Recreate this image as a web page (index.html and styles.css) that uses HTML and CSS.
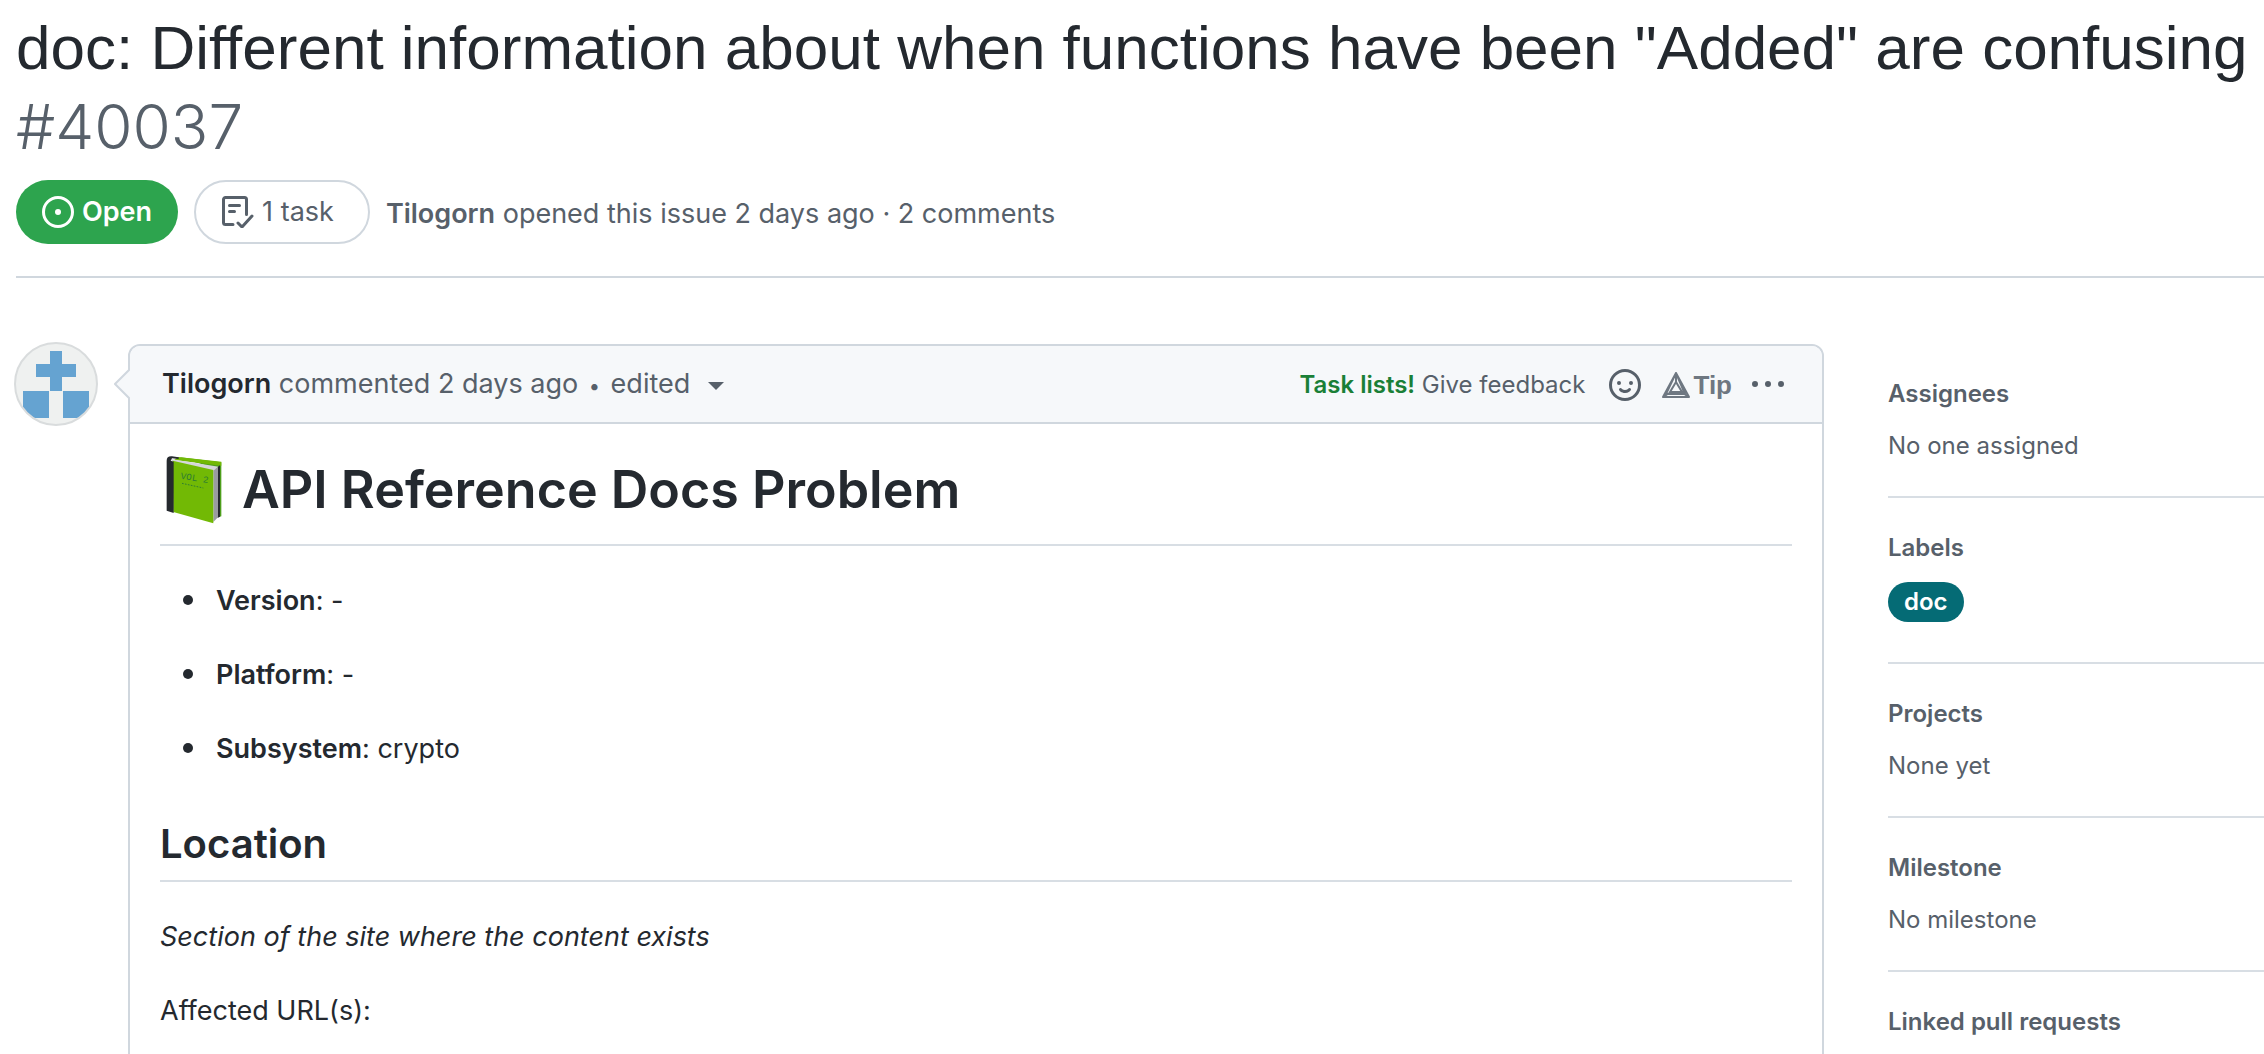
FILE: index.html
```
<!DOCTYPE html>
<html lang="en">
<head>
  <meta charset="UTF-8">
  <title>doc: Different information about when functions have been "Added" are confusing #40037</title>
  <link rel="stylesheet" href="styles.css">
</head>
<body>

  <header class="issue-header">
    <h1 class="issue-title">
      <span>doc: Different information about when functions have been "Added" are confusing</span>
      <span class="issue-number">#40037</span>
    </h1>
    <div class="issue-meta">
      <span class="state">
        <svg width="32" height="32" viewBox="0 0 16 16" fill="currentColor" aria-hidden="true"><path d="M8 9.5a1.5 1.5 0 100-3 1.5 1.5 0 000 3z"/><path fill-rule="evenodd" d="M8 0a8 8 0 100 16A8 8 0 008 0zM1.5 8a6.5 6.5 0 1113 0 6.5 6.5 0 01-13 0z"/></svg>
        Open
      </span>
      <span class="tasks">
        <svg width="32" height="32" viewBox="0 0 16 16" fill="none" stroke="currentColor" stroke-width="1.5" stroke-linecap="round" stroke-linejoin="round" aria-hidden="true"><path d="M5.5 14.25H1.75a1 1 0 01-1-1V1.75a1 1 0 011-1h9.5a1 1 0 011 1v7.5M3.75 4.75h5M3.75 7.75h2.5M8 13.5l2 2 5-5.5"/></svg>
        1 task
      </span>
      <span class="opened"><a class="author" href="#">Tilogorn</a> opened this issue 2 days ago · 2 comments</span>
    </div>
  </header>

  <div class="layout">
    <a class="avatar" href="#" aria-label="Tilogorn">
      <svg width="84" height="84" viewBox="0 0 84 84" aria-hidden="true">
        <defs><clipPath id="round"><circle cx="42" cy="42" r="41"/></clipPath></defs>
        <circle cx="42" cy="42" r="41" fill="#eff1f0"/>
        <path clip-path="url(#round)" fill="#65a3d1" d="M36 9h12v13h14v13H48v14h27v27H49V49H35v27H9V49h27V35H22V22h14z"/>
        <circle cx="42" cy="42" r="41" fill="none" stroke="#d9dcdd" stroke-width="2"/>
      </svg>
    </a>

    <main class="comment">
      <div class="comment-header">
        <svg class="caret" width="16" height="32" viewBox="0 0 16 32" aria-hidden="true"><path d="M16 1L1 16l15 15" fill="#f6f8fa" stroke="#d0d7de" stroke-width="2"/></svg>
        <div class="comment-info">
          <a class="author dark" href="#">Tilogorn</a> commented 2 days ago <span class="dot">•</span>
          <button class="edited">edited <span class="triangle"></span></button>
        </div>
        <div class="comment-actions">
          <span class="feedback"><a class="task-lists" href="#">Task lists!</a> <a href="#">Give feedback</a></span>
          <button class="icon-btn" aria-label="Add reaction">
            <svg width="32" height="32" viewBox="0 0 16 16" fill="currentColor" aria-hidden="true"><path fill-rule="evenodd" d="M1.5 8a6.5 6.5 0 1113 0 6.5 6.5 0 01-13 0zM8 0a8 8 0 100 16A8 8 0 008 0zM5 8a1 1 0 100-2 1 1 0 000 2zm7-1a1 1 0 11-2 0 1 1 0 012 0zM5.32 9.636a.75.75 0 011.038.175l.007.009c.103.118.22.222.35.31.264.178.683.37 1.285.37.602 0 1.02-.192 1.285-.371.13-.088.247-.192.35-.31l.007-.008a.75.75 0 111.222.87l-.614-.431c.614.43.614.431.613.431v.001l-.001.002-.002.003-.005.007-.014.019a1.984 1.984 0 01-.184.213c-.16.166-.338.316-.53.445-.63.418-1.37.638-2.127.629-.946 0-1.652-.308-2.126-.63a3.331 3.331 0 01-.715-.657l-.014-.02-.005-.006-.002-.003v-.002h-.001l.613-.432-.614.43a.75.75 0 01.183-1.044z"/></svg>
          </button>
          <button class="tip">
            <svg width="30" height="28" viewBox="0 0 30 28" fill="none" stroke="currentColor" stroke-width="2" stroke-linejoin="round" aria-hidden="true"><path d="M15 2L2 26h26zM15 2v10M2 26l8-5M28 26l-8-5M15 11l-6 10h12zM15 2l9 21H5z"/></svg>
            Tip
          </button>
          <button class="icon-btn" aria-label="Show options">
            <svg width="32" height="32" viewBox="0 0 16 16" fill="currentColor" aria-hidden="true"><path d="M8 9a1.5 1.5 0 100-3 1.5 1.5 0 000 3zM1.5 9a1.5 1.5 0 100-3 1.5 1.5 0 000 3zm13 0a1.5 1.5 0 100-3 1.5 1.5 0 000 3z"/></svg>
          </button>
        </div>
      </div>

      <div class="comment-body">
        <h1>
          <svg class="book" width="56" height="68" viewBox="0 0 168 204" role="img" aria-label="green book">
            <path fill="#4d9e1c" d="M36 3l130 16v162l-8 3V40z"/>
            <path fill="#72b905" d="M36 3l130 14v12L24 12z"/>
            <path fill="#d5d6da" d="M14 9l144 23-16 12L18 16z"/>
            <path fill="#9a9ba1" d="M142 44l14-12v152l-14 14z"/>
            <path fill="#25292e" d="M156 32l6-4v154l-6 3z"/>
            <path fill="#72b905" d="M20 14l122 28v160L22 168z"/>
            <path fill="#25292e" d="M2 14C2 4 8 0 18 1l20 3v5l-20-2-4 7 9 3v154L2 164z"/>
            <text class="book-label" x="43" y="68" transform="rotate(9 43 68)">VOL 2</text>
            <path d="M48 82l64 14" stroke="#2f7d32" stroke-width="3" stroke-dasharray="5 4"/>
          </svg>
          API Reference Docs Problem
        </h1>
        <ul>
          <li><strong>Version</strong>: -</li>
          <li><strong>Platform</strong>: -</li>
          <li><strong>Subsystem</strong>: crypto</li>
        </ul>
        <h2>Location</h2>
        <p><em>Section of the site where the content exists</em></p>
        <p>Affected URL(s):</p>
      </div>
    </main>

    <aside class="sidebar">
      <section>
        <h3>Assignees</h3>
        <p>No one assigned</p>
      </section>
      <section>
        <h3>Labels</h3>
        <a class="label" href="#">doc</a>
      </section>
      <section>
        <h3>Projects</h3>
        <p>None yet</p>
      </section>
      <section>
        <h3>Milestone</h3>
        <p>No milestone</p>
      </section>
      <section>
        <h3>Linked pull requests</h3>
      </section>
    </aside>
  </div>

</body>
</html>
```

FILE: styles.css
```
* { box-sizing: border-box; }
html { overflow: hidden; }
body { margin: 0; padding: 8px 0 0 16px; font-family: Inter, "Liberation Sans", sans-serif; font-size: 27px; line-height: 42px; color: #24292f; background: #fff; }
h1, h2, h3, p, ul { margin: 0; }
a { color: inherit; text-decoration: none; }
button { padding: 0; border: 0; background: none; font: inherit; color: inherit; cursor: pointer; }
svg { flex: none; }

.issue-header { padding-bottom: 32px; border-bottom: 2px solid #d0d7de; }
.issue-title { display: flex; flex-wrap: wrap; column-gap: 16px; font-family: "Liberation Sans", sans-serif; font-size: 62px; line-height: 79px; font-weight: 400; }
.issue-number { color: #57606a; font-family: Inter, sans-serif; font-weight: 300; }
.issue-meta { display: flex; align-items: center; margin-top: 14px; color: #57606a; }
.state, .tasks { display: flex; align-items: center; gap: 8px; height: 64px; padding: 0 26px; border-radius: 32px; margin-right: 16px; }
.state { background: #2da44e; color: #fff; font-weight: 600; }
.tasks { border: 2px solid #d0d7de; padding: 0 34px 0 26px; }
.opened { padding-top: 4px; }
.author { font-weight: 600; }
.dark { color: #24292f; }

.layout { display: grid; grid-template-columns: 112px minmax(0, 1fr) 440px; align-items: start; margin-top: 64px; }
.avatar { display: flex; margin-left: -2px; }

.comment { border: 2px solid #d0d7de; border-radius: 12px; margin-top: 2px; }
.comment-header { position: relative; display: flex; justify-content: space-between; align-items: center; height: 78px; padding: 2px 38px 0 32px; background: #f6f8fa; border-bottom: 2px solid #d0d7de; border-radius: 10px 10px 0 0; color: #57606a; }
.caret { position: absolute; left: -16px; top: 22px; }
.dot { margin: 0 3px; font-size: 20px; }
.triangle { display: inline-block; border: 8px solid transparent; border-top-color: currentColor; border-bottom: 0; margin-left: 10px; vertical-align: middle; }
.comment-actions { display: flex; align-items: center; gap: 20px; }
.feedback { margin-right: 4px; font-size: 24px; }
.task-lists { color: #1a7f37; font-weight: 600; }
.icon-btn { display: flex; }
.tip { display: flex; align-items: center; gap: 2px; font: bold 26px "Liberation Sans", sans-serif; color: #6e7781; }

.comment-body { padding: 32px 30px; }
.comment-body h1 { display: flex; align-items: center; gap: 20px; height: 90px; padding: 0 0 20px 6px; border-bottom: 2px solid #d8dee4; font-size: 52px; font-weight: 600; }
.book-label { font: 28px "Liberation Mono", monospace; fill: #2f7d32; }
.comment-body ul { padding-left: 50px; margin-top: 32px; }
.comment-body li { height: 42px; padding-left: 6px; }
.comment-body li::marker { font-size: 32px; }
.comment-body li, .comment-body p { margin-bottom: 32px; }
.comment-body strong { font-weight: 600; }
.comment-body h2 { padding-bottom: 10px; margin: 50px 0 34px; border-bottom: 2px solid #d8dee4; font-size: 40px; line-height: 52px; font-weight: 600; }

.sidebar { margin-left: 64px; padding-top: 34px; font-size: 24px; line-height: 36px; color: #57606a; }
.sidebar section { padding-bottom: 32px; margin-bottom: 32px; border-bottom: 2px solid #d8dee4; }
.sidebar section:last-child { padding: 0; margin: 0; border: 0; }
.sidebar h3 { font-size: 24px; font-weight: 600; margin-bottom: 16px; }
.sidebar section:last-child h3 { margin: 0; }
.label { display: block; width: fit-content; height: 40px; padding: 0 16px; margin-bottom: 8px; border-radius: 20px; background: #056b75; color: #fff; font-weight: 600; line-height: 40px; }
```
